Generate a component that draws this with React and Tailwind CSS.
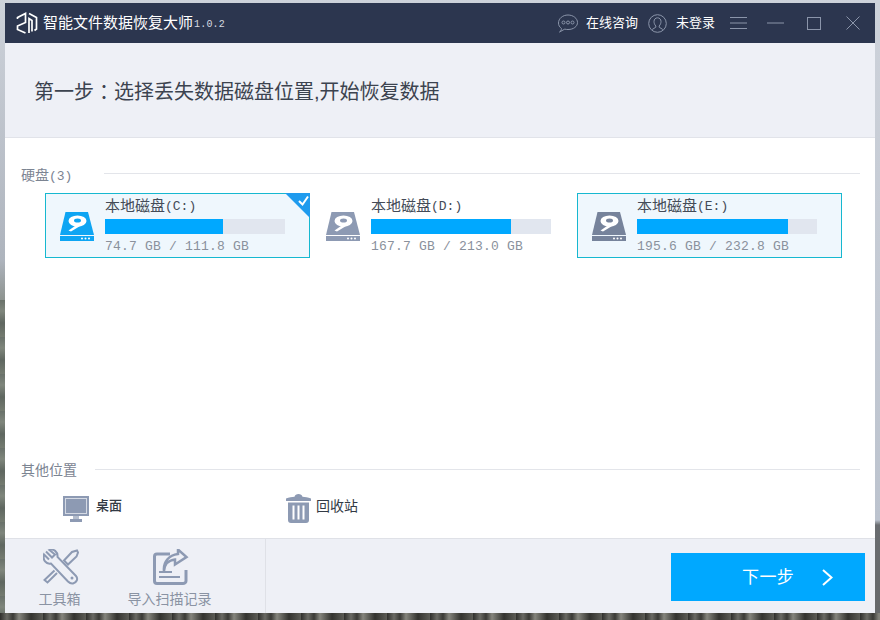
const Logo = () => (
  <svg width="22" height="22" viewBox="0 0 22 22" fill="none" stroke="#fff" strokeWidth="1.7">
    <path d="M1.500 7V5.500L9.500 1.500V10.500L1.500 14V17.500L9.500 21" />
    <path d="M13 1.500L20.500 5.500V17L18.500 18.500M13 21V6.500L16 8.500V19.500" />
  </svg>
);

const DiskIcon = ({ color }) => (
  <svg width="34" height="29" viewBox="0 0 34 29">
    <path d="M5.500 0H28L34 23H0Z" fill={color} />
    <rect x="0" y="24" width="34" height="5" fill={color} />
    <circle cx="22" cy="26.500" r="1" fill="#fff" />
    <circle cx="25.500" cy="26.500" r="1" fill="#fff" />
    <circle cx="29" cy="26.500" r="1" fill="#fff" />
    <ellipse cx="17.500" cy="9" rx="9" ry="5.500" fill="#fff" />
    <ellipse cx="17.500" cy="8.500" rx="3.500" ry="2" fill={color} />
    <path d="M15 14L8.500 18.500L11 19.500L21 13.500Z" fill="#fff" />
  </svg>
);

const disks = [
  { label: "本地磁盘", drive: "(C:)", size: "74.7 GB / 111.8 GB", used: 118, icon: "#0ea5f3", active: true, checked: true },
  { label: "本地磁盘", drive: "(D:)", size: "167.7 GB / 213.0 GB", used: 140, icon: "#8d9ab3" },
  { label: "本地磁盘", drive: "(E:)", size: "195.6 GB / 232.8 GB", used: 151, icon: "#76839b", active: true },
];

function DiskCard({ disk }) {
  return (
    <div
      className={
        disk.active
          ? "relative flex h-[65px] w-[265px] items-center bg-[#eff7fd] ring-1 ring-inset ring-[#16b8d0]"
          : "relative flex h-[65px] w-[265px] items-center bg-white"
      }
    >
      <div className="ml-[15px] mt-[2px] w-[45px] shrink-0">
        <DiskIcon color={disk.icon} />
      </div>
      <div className="flex flex-col">
        <div className="h-[24px] text-[15px] leading-[22px] text-[#444b57]">
          {disk.label}
          <span className="relative top-[-1px] font-['Liberation_Mono',monospace] text-[13px]">{disk.drive}</span>
        </div>
        <div className="h-[15px] w-[180px] bg-[#e1e6ef]">
          <div className="h-full bg-[#00a8ff]" style={{ width: disk.used }}></div>
        </div>
        <div className="mt-[3px] font-['Liberation_Mono',monospace] text-[13px] leading-[20px] tracking-[0.2px] text-[#8a919c]">
          {disk.size}
        </div>
      </div>
      {disk.checked && (
        <svg className="absolute right-0 top-0" width="25" height="25" viewBox="0 0 25 25">
          <path d="M0 0H25V25Z" fill="#1f9bee" />
          <path d="M14 8L17.500 11.500L23 3.500" fill="none" stroke="#fff" strokeWidth="2" />
        </svg>
      )}
    </div>
  );
}

export default function App() {
  return (
    <div className="h-[620px] w-[880px] overflow-hidden px-[5px] pt-[3px] font-['Liberation_Sans','Noto_Sans_CJK_SC',sans-serif] [background:repeating-linear-gradient(90deg,#2f2f2c_0px,#6a6a64_7px,#3a3a36_13px,#85857d_19px,#33332f_31px,#5c5c56_43px)_0_613px/100%_7px_no-repeat,linear-gradient(to_bottom,#cdd2da_0px,#bcc3ce_520px,#6a6d70_525px,#66686a_620px)_875px_0/5px_100%_no-repeat,repeating-linear-gradient(to_bottom,#69716a_0px,#7f867c_11px,#5f6760_23px,#747b70_37px)_0_300px/5px_100%_no-repeat,linear-gradient(to_bottom,#cdd2da_0px,#aeb4bd_260px,#8d938f_300px)_0_0/100%_300px_no-repeat]">
      <div className="flex h-[610px] w-[870px] flex-col">
        <div className="flex h-[40px] shrink-0 items-center bg-[#2c364f] pl-[11px]">
          <Logo />
          <span className="ml-[5px] text-[15px] text-white">智能文件数据恢复大师</span>
          <span className="ml-[1px] mt-[3px] w-[32px] font-['Liberation_Mono',monospace] text-[10px] tracking-[0.2px] text-[#d5d9e0]">1.0.2</span>
          <svg className="ml-[332px]" width="20" height="19" viewBox="0 0 20 19" fill="none" stroke="#8b95aa" strokeWidth="1">
            <path d="M3.500 14.500C1.500 13 .5 11.300 .5 9C.5 4.500 4.700 1 10 1S19.500 4.500 19.500 8.500S15.500 15.500 10 15.500C8.800 15.500 7.800 15.400 6.800 15.100L1.500 18C2.800 17 3.400 15.800 3.500 14.500Z" />
            <circle cx="5.500" cy="8.500" r="1.500" />
            <circle cx="10" cy="8.500" r="1.500" />
            <circle cx="14.500" cy="8.500" r="1.500" />
          </svg>
          <span className="ml-[8px] text-[13px] text-white">在线咨询</span>
          <svg className="ml-[10px]" width="19" height="19" viewBox="0 0 19 19" fill="none" stroke="#8b95aa" strokeWidth="1">
            <circle cx="9.500" cy="9.500" r="8.800" />
            <path d="M7.800 12C6.500 10.500 6 9 6 7.500C6 5.300 7.500 3.800 9.500 3.800S13 5.300 13 7.500C13 9 12.500 10.500 11.200 12V13.200L14.800 15.500M7.800 12V13.200L4.200 15.500" />
          </svg>
          <span className="ml-[9px] text-[13px] text-white">未登录</span>
          <svg className="ml-[15px]" width="17" height="12" viewBox="0 0 17 12" stroke="#8b95aa" strokeWidth="1">
            <path d="M0 .5H17M0 6H17M0 11.500H17" />
          </svg>
          <svg className="ml-[20px]" width="17" height="2" viewBox="0 0 17 2" stroke="#8b95aa" strokeWidth="1">
            <path d="M0 1H17" />
          </svg>
          <svg className="ml-[23px]" width="14" height="13" viewBox="0 0 14 13" fill="none" stroke="#8b95aa" strokeWidth="1">
            <rect x=".5" y=".5" width="13" height="12" />
          </svg>
          <svg className="ml-[25px]" width="14" height="14" viewBox="0 0 14 14" stroke="#8b95aa" strokeWidth="1">
            <path d="M.5 .5L13.500 13.500M13.500 .5L.5 13.500" />
          </svg>
        </div>

        <div className="flex h-[95px] shrink-0 items-center border-b border-[#e1e3e9] bg-[#eef0f6] pl-[29px] pt-[3px] text-[20px] text-[#3c434f]">
          第一步<span className="font-['Noto_Sans_CJK_TC',sans-serif]">：</span>选择丢失数据磁盘位置,开始恢复数据
        </div>

        <div className="flex flex-1 flex-col bg-white pt-[27px]">
          <div className="flex h-[20px] items-center pl-[16px] pr-[15px] text-[14px] text-[#7c8492]">
            <span className="w-[83px] pt-[2px]">
              硬盘<span className="font-['Liberation_Mono',monospace] text-[13px]">(3)</span>
            </span>
            <div className="mb-[4px] h-px flex-1 bg-[#e3e5ea]"></div>
          </div>
          <div className="ml-[40px] mt-[8px] flex gap-px">
            <DiskCard disk={disks[0]} />
            <DiskCard disk={disks[1]} />
            <DiskCard disk={disks[2]} />
          </div>

          <div className="mt-[201px] flex h-[20px] items-center pl-[16px] pr-[15px] text-[14px] text-[#7c8492]">
            <span className="w-[74px] pt-[2px]">其他位置</span>
            <div className="h-px flex-1 bg-[#e3e5ea]"></div>
          </div>
          <div className="mt-[15px] flex items-center">
            <svg className="ml-[58px]" width="26" height="26" viewBox="0 0 26 26">
              <rect width="26" height="20" fill="#8d9ab3" />
              <rect x="2.500" y="2.500" width="21" height="15" fill="#8d9ab3" stroke="#d5dae4" strokeWidth="1" />
              <rect x="10" y="20" width="6" height="3" fill="#b4bdcd" />
              <rect x="7" y="23" width="12" height="3" fill="#8d9ab3" />
            </svg>
            <span className="mb-[5px] ml-[7px] text-[13px] font-medium text-[#333a45]">桌面</span>
            <svg className="ml-[164px]" width="25" height="29" viewBox="0 0 25 29">
              <path d="M0 4.500C3 3.500 6 3 8.500 2.800C9 1 10.500 0 12.500 0S16 1 16.500 2.800C19 3 22 3.500 25 4.500V7H0Z" fill="#8d9ab3" />
              <path d="M2 8.500H23V26C23 27.800 22 29 20 29H5C3 29 2 27.800 2 26ZM6.500 11.500V25.500H8.500V11.500ZM11.500 11.500V25.500H13.500V11.500ZM16.500 11.500V25.500H18.500V11.500Z" fill="#8d9ab3" fillRule="evenodd" />
            </svg>
            <span className="mb-[5px] ml-[5px] text-[14px] text-[#333a45]">回收站</span>
          </div>
        </div>

        <div className="flex h-[75px] shrink-0 border-t border-[#dfe1e7] bg-[#eef0f6]">
          <div className="flex w-[261px] border-r border-[#dfe1e7] text-[14px] text-[#8a93a3]">
            <div className="ml-[33px] flex w-[43px] flex-col items-center pt-[10px]">
              <svg className="ml-[3px]" width="36" height="36" viewBox="0 0 36 36" fill="none" stroke="#8d9ab3" strokeWidth="2">
                <path d="M3 2.500L9 8.500L12 5.500L6.500 1C10.500 -.5 15 2.500 14.500 8L33 27C35.500 30 33.500 33.500 30 34.500C28 35 26.500 34 25 32.500L8 14.500C3 15.500 -.5 11 1 5.500L6 10.500" />
                <circle cx="29" cy="29" r="1.500" fill="#8d9ab3" stroke="none" />
                <path d="M21 11.500L29 3L34 1.500L35 3.500L33.500 7.500L25 15.500Z" />
                <path d="M14 24L4.500 33.500L1.500 31L11.500 21.500" />
              </svg>
              <span className="mt-[4px] leading-[20px]">工具箱</span>
            </div>
            <div className="ml-[46px] flex w-[85px] flex-col items-center pt-[10px]">
              <svg className="ml-[2px]" width="36" height="36" viewBox="0 0 36 36" fill="none" stroke="#8d9ab3" strokeWidth="3">
                <path d="M17 5H4C2.500 5 1.500 6 1.500 7.500V32C1.500 33.500 2.500 34.500 4 34.500H30C31.500 34.500 33 33.500 33 32V21" />
                <path d="M11 22C11.500 15 16 11 22 10.500V15.500L33.500 8L25 .5V5C16 6 10 13 11 22Z" strokeWidth="2.500" />
                <path d="M6 23H19M6 28H27" strokeWidth="2" />
              </svg>
              <span className="mt-[4px] leading-[20px]">导入扫描记录</span>
            </div>
          </div>
          <div className="flex flex-1 justify-end pr-[10px] pt-[14px]">
            <div className="flex h-[48px] w-[194px] items-center bg-[#00a8ff] pl-[71px] text-[17px] tracking-[0.4px] text-white">
              <span className="pt-[1px]">下一步</span>
              <svg className="ml-[28px]" width="11" height="17" viewBox="0 0 11 17" fill="none" stroke="#fff" strokeWidth="2">
                <path d="M1 1L9.500 8.500L1 16" />
              </svg>
            </div>
          </div>
        </div>
      </div>
    </div>
  );
}
